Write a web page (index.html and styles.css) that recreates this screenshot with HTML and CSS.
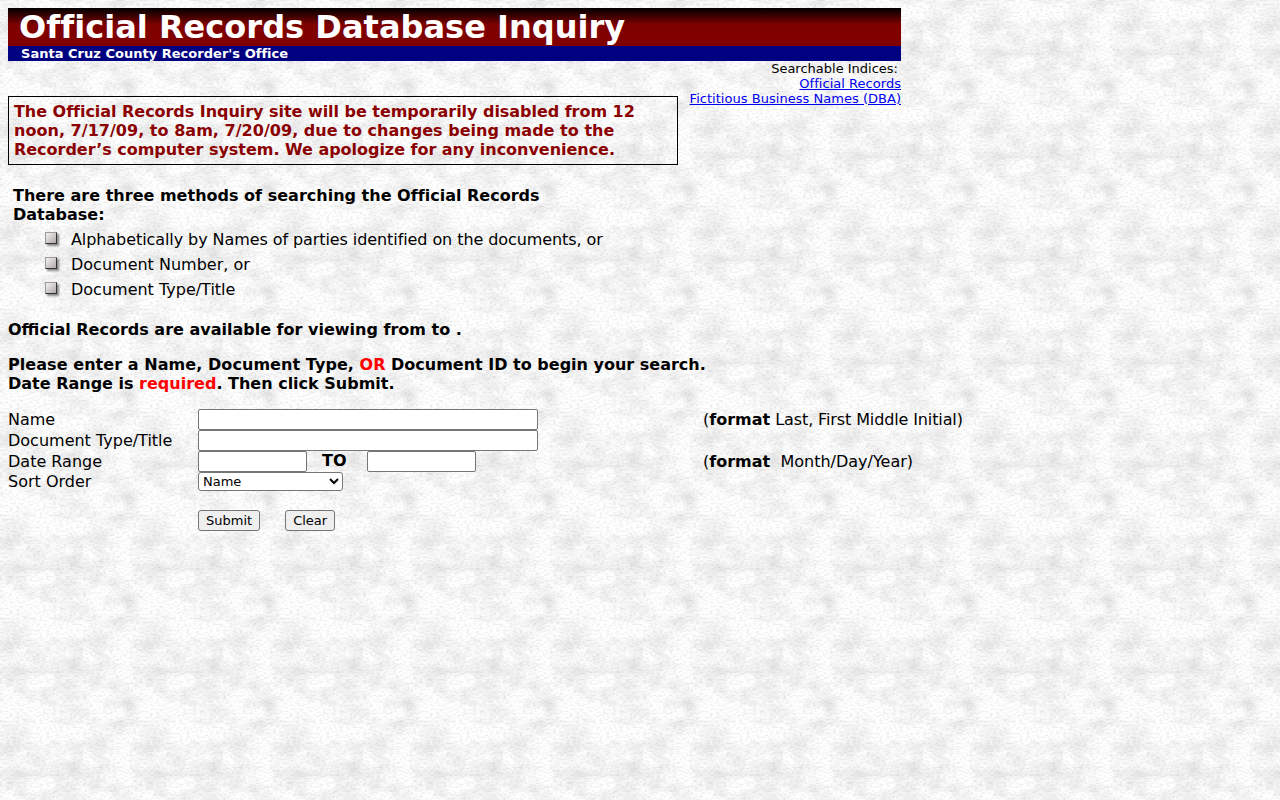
FILE: index.html
```html
<!DOCTYPE html>
<html lang="en">
<head>
<meta charset="utf-8">
<title>Official Records Database Inquiry</title>
<link rel="stylesheet" href="styles.css">
</head>
<body>
<div class="page">
  <header class="banner">
    <h1 class="banner-title">Official Records Database Inquiry</h1>
    <div class="banner-sub">Santa Cruz County Recorder's Office</div>
  </header>
  <div class="top-row">
    <div class="notice">
      <span class="line tight">The Official Records Inquiry site will be temporarily disabled from 12</span>
      <span class="line loose">noon, 7/17/09, to 8am, 7/20/09, due to changes being made to the</span>
      <span class="line tight-end">Recorder’s computer system. We apologize for any inconvenience.</span>
    </div>
    <div class="indices">
      <div class="indices-label">Searchable Indices:</div>
      <a href="#">Official Records</a><br>
      <a href="#">Fictitious Business Names (DBA)</a>
    </div>
  </div>
</div>
<div class="methods">
  <p class="methods-title">There are three methods of searching the Official Records Database:</p>
  <ul class="method-list">
    <li class="method"><span class="bullet"></span><span class="method-long">Alphabetically by Names of parties identified on the documents, or</span></li>
    <li class="method"><span class="bullet"></span>Document Number, or</li>
    <li class="method"><span class="bullet"></span>Document Type/Title</li>
  </ul>
</div>
<p class="avail">Official Records are available for viewing from to .</p>
<p class="instr"><span class="instr-lead">Please enter a Name, Document Type,</span> <span class="red">OR</span> Document ID to begin your search.<br>Date Range is <span class="red">required</span>. Then click Submit.</p>
<form class="search-form">
  <label class="f-label">Name</label>
  <div class="f-field"><input class="input-wide" type="text"></div>
  <div class="f-hint">(<b>format</b> <span class="hint-text">Last, First Middle Initial)</span></div>

  <label class="f-label">Document Type/Title</label>
  <div class="f-field"><input class="input-wide" type="text"></div>
  <div class="f-hint"></div>

  <label class="f-label">Date Range</label>
  <div class="f-field dates"><input class="input-date" type="text"><b class="to">TO</b><input class="input-date" type="text"></div>
  <div class="f-hint">(<b>format</b>&nbsp; Month/Day/Year)</div>

  <label class="f-label">Sort Order</label>
  <div class="f-field"><select class="sort"><option>Name</option></select></div>
  <div class="f-hint"></div>

  <div class="f-label"></div>
  <div class="f-field buttons"><button type="button" class="btn">Submit</button><button type="button" class="btn">Clear</button></div>
</form>
</body>
</html>
```
FILE: styles.css
```css
html, body { margin: 0; padding: 0; }
body {
  padding: 8px;
  height: 784px;
  overflow: hidden;
  font-family: "DejaVu Sans", sans-serif;
  font-size: 16px;
  line-height: 19px;
  color: #000;
  background-color: #f7f7f7;
  background-image: url("data:image/svg+xml;utf8,<svg xmlns='http://www.w3.org/2000/svg' width='140' height='103'><filter id='n' x='0' y='0' width='100%' height='100%' color-interpolation-filters='sRGB'><feTurbulence type='fractalNoise' baseFrequency='0.036 0.048' numOctaves='3' seed='23' stitchTiles='stitch'/><feColorMatrix values='0 0 0 0 0  0 0 0 0 0  0 0 0 0 0  2 0 0 0 -0.8'/></filter><filter id='g' x='0' y='0' width='100%' height='100%' color-interpolation-filters='sRGB'><feTurbulence type='fractalNoise' baseFrequency='0.3 0.5' numOctaves='2' seed='5' stitchTiles='stitch'/><feColorMatrix values='0 0 0 0 0  0 0 0 0 0  0 0 0 0 0  3 0 0 0 -1.35'/></filter><rect width='140' height='103' fill='white'/><rect width='140' height='103' filter='url(%23n)' opacity='0.11'/><rect width='140' height='103' filter='url(%23g)' opacity='0.07'/></svg>");
  background-size: 140px 103px;
}
.page { width: 893px; }
.banner-title {
  margin: 0;
  height: 38px;
  padding-left: 11px;
  font-size: 32px;
  line-height: 38px;
  font-weight: bold;
  letter-spacing: 0.03px;
  color: #fff;
  background: linear-gradient(#000 0, #800000 17px, #800000 100%);
}
.banner-sub {
  height: 15px;
  padding-left: 13px;
  font-size: 13px;
  line-height: 15px;
  font-weight: bold;
  letter-spacing: 0.02px;
  color: #fff;
  background: #000080;
}
.top-row { display: flex; justify-content: space-between; align-items: flex-start; }
.notice {
  box-sizing: border-box;
  width: 670px;
  margin-top: 35px;
  padding: 5px;
  border: 1px solid #000;
  color: #8b0000;
  font-weight: bold;
}
.line { display: block; white-space: nowrap; }
.tight { letter-spacing: -0.04px; }
.tight-end { letter-spacing: -0.03px; }
.loose { letter-spacing: 0.03px; }
.indices { font-size: 13px; line-height: 15px; text-align: right; }
.indices-label { padding-right: 3px; }
.indices a { color: #0000ee; letter-spacing: 0.03px; }
.methods { margin: 21px 0 0 5px; }
.methods-title { margin: 0 0 3px; width: 560px; font-weight: bold; letter-spacing: 0.01px; }
.method-list { margin: 0; padding: 0; list-style: none; }
.method { display: flex; align-items: center; height: 25px; padding-left: 32px; }
.method-long { letter-spacing: -0.08px; }
.bullet {
  box-sizing: border-box;
  width: 12px;
  height: 12px;
  margin-right: 14px;
  margin-top: -4px;
  border: 1px solid;
  border-color: #9a9a9a #333 #333 #9a9a9a;
  background: linear-gradient(135deg, #f2f2f2, #b0a8a8);
  box-shadow: 2px 2px 2px #888;
}
.avail { margin: 18px 0 0; font-weight: bold; }
.instr { margin: 16px 0 0; font-weight: bold; }
.instr-lead { letter-spacing: 0.06px; }
.red { color: #f00; }
.search-form {
  display: grid;
  grid-template-columns: 190px 505px auto;
  width: 1100px;
  margin-top: 16px;
}
.f-label, .f-hint { white-space: nowrap; align-self: center; }
.hint-text { letter-spacing: -0.12px; }
.f-field { display: flex; align-items: center; }
input {
  box-sizing: border-box;
  height: 21px;
  margin: 0;
  padding: 1px 2px;
  border: 1px solid #767676;
  border-radius: 2px;
  background: #fff;
}
.input-wide { width: 340px; }
.input-date { width: 109px; }
.to { width: 60px; padding-left: 15px; padding-bottom: 2px; box-sizing: border-box; }
.sort {
  width: 145px;
  height: 19px;
  font-family: "DejaVu Sans", sans-serif;
  font-size: 13px;
  background: #fff;
  border: 1px solid #767676;
  border-radius: 3px;
}
.buttons { gap: 25px; margin-top: 19px; }
.btn {
  height: 21px;
  padding: 1px 7px;
  font-family: "DejaVu Sans", sans-serif;
  font-size: 13px;
  background: #efefef;
  border: 1px solid #767676;
  border-radius: 3px;
  color: #000;
}
```
